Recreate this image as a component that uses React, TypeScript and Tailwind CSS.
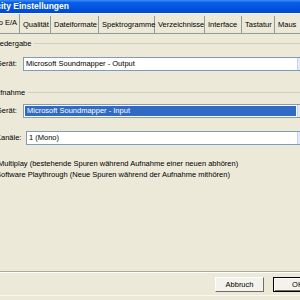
const tabs = [
  { label: "Qualität", w: "w-[31px]" },
  { label: "Dateiformate", w: "w-[48px]" },
  { label: "Spektrogramme", w: "w-[56px]" },
  { label: "Verzeichnisse", w: "w-[50px]" },
  { label: "Interface", w: "w-[37px]" },
  { label: "Tastatur", w: "w-[33px]" },
  { label: "Maus", w: "w-[40px]" },
];

// group heading with etched line running to the right
const GroupLabel = ({ text }: { text: string }) => (
  <div className="flex h-[9px] items-center">
    <span className="-ml-[9px] whitespace-nowrap pr-[3px]">{text}</span>
    <div className="h-[1px] flex-1 bg-[#D0D0BF]" />
  </div>
);

type ComboProps = { label: string; value: string; labelW: string; selected?: boolean };

const Combo = ({ label, value, labelW, selected }: ComboProps) => (
  <div className="flex h-[14px] items-center">
    <span className={`-ml-[4px] shrink-0 whitespace-nowrap ${labelW}`}>{label}</span>
    <div className="flex h-full flex-1 border border-[#7F9DB9] bg-white">
      <div
        className={`flex flex-1 items-center whitespace-nowrap pl-[2px] ${
          selected ? "m-[1px] bg-[#316AC5] text-white" : ""
        }`}
      >
        {value}
      </div>
      <div className="flex w-[15px] items-center justify-center border-l border-[#C3D3FD] bg-[#E3E9F7] text-[6px] text-[#4D6185]">
        ▼
      </div>
    </div>
  </div>
);

export default function App() {
  return (
    <div className="h-[300px] w-[300px] overflow-hidden bg-[#ECE9D8]">
      <div
        className="flex h-[300px] w-[330px] flex-col text-[7.5px] text-black"
        style={{ fontFamily: '"Liberation Sans", Arial, sans-serif' }}
      >
        {/* title bar */}
        <div className="flex h-[13px] items-center bg-[linear-gradient(180deg,#3D8BF5_0%,#0A5FE6_20%,#0054E3_60%,#0049CF_100%)]">
          <span className="-ml-[25px] whitespace-nowrap text-[8.5px] font-bold text-white">
            Audacity Einstellungen
          </span>
        </div>
        <div className="h-[1px] bg-[#F7F5EC]" />

        {/* tabs */}
        <div className="flex h-[19px] items-end">
          <div className="flex h-[19px] w-[20px] items-center justify-end whitespace-nowrap border-r border-[#919B9C] pr-[2px] pb-[2px]">
            Audio E/A
          </div>
          {tabs.map((t) => (
            <div
              key={t.label}
              className={`flex h-[17px] items-center whitespace-nowrap border-r border-[#919B9C] pl-[3px] ${t.w}`}
            >
              {t.label}
            </div>
          ))}
          <div className="flex-1" />
        </div>
        <div className="h-[1px] bg-[#919B9C]" />

        {/* panel */}
        <div className="flex flex-1 flex-col pr-[17px]">
          <div className="mt-[5px]">
            <GroupLabel text="Wiedergabe" />
          </div>
          <div className="mt-[9px]">
            <Combo label="Gerät:" labelW="w-[27px]" value="Microsoft Soundmapper - Output" />
          </div>
          <div className="mt-[17px]">
            <GroupLabel text="Aufnahme" />
          </div>
          <div className="mt-[7px]">
            <Combo label="Gerät:" labelW="w-[27px]" value="Microsoft Soundmapper - Input" selected />
          </div>
          <div className="mt-[13px]">
            <Combo label="Kanäle:" labelW="w-[30px]" value="1 (Mono)" />
          </div>
          <div className="mt-[13px] flex flex-col">
            <div className="flex h-[11px] items-center whitespace-nowrap">
              <span className="-ml-[2px]">Multiplay (bestehende Spuren während Aufnahme einer neuen abhören)</span>
            </div>
            <div className="flex h-[11px] items-center whitespace-nowrap">
              <span className="-ml-[4px]">Software Playthrough (Neue Spuren während der Aufnahme mithören)</span>
            </div>
          </div>
        </div>

        {/* footer */}
        <div className="h-[1px] bg-[#ACA899]" />
        <div className="h-[1px] bg-white" />
        <div className="mt-[4px] flex justify-end gap-[9px] pr-[8px]">
          <button className="flex h-[15px] w-[49px] items-center justify-center border border-t-white border-l-white border-r-[#716F64] border-b-[#716F64] bg-[#F3F2EC]">
            Abbruch
          </button>
          <button className="flex h-[15px] w-[49px] items-center justify-center border border-black bg-[#F3F2EC] shadow-[inset_1px_1px_0_white,inset_-1px_-1px_0_#716F64]">
            OK
          </button>
        </div>
        <div className="mt-[3px] h-[1px] bg-[#F8F7F2]" />
        <div className="h-[4px]" />
      </div>
    </div>
  );
}
